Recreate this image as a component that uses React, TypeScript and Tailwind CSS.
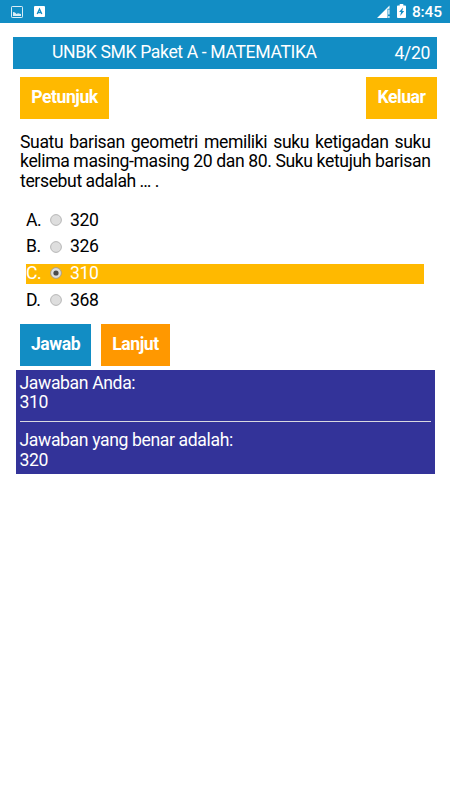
import React from "react";
import clsx from "clsx";

type Option = {
  label: string;
  value: string;
};

const options: Option[] = [
  { label: "A.", value: "320" },
  { label: "B.", value: "326" },
  { label: "C.", value: "310" },
  { label: "D.", value: "368" },
];

const selected = "310";
const correct = "320";

function StatusBar() {
  return (
    <div className="flex h-[23px] items-center bg-[#128dc4] pr-[8px] pl-[11px] text-white">
      <svg width="12" height="12" viewBox="0 0 12 12" className="opacity-85">
        <rect x="0.5" y="0.5" width="11" height="11" rx="0.7" fill="none" stroke="currentColor" />
        <path d="M2 10V6l2 .5L5.500 8l1.500-.7L10 8v2z" fill="currentColor" />
      </svg>
      <svg width="11" height="11" viewBox="0 0 11 11" className="ml-[11px]">
        <rect width="11" height="11" rx="1" fill="currentColor" />
        <path d="M3.200 8 5.500 3 7.800 8M4 6.500h3" fill="none" stroke="#128dc4" strokeWidth="1.300" />
      </svg>
      {/* signal */}
      <svg width="13" height="13" viewBox="0 0 13 13" className="ml-auto">
        <path d="M0 13 12.500 .5v3.200h-2V13z" fill="currentColor" />
        <path d="M11.300 4.500h1.200v5h-1.200zM11.300 11h1.200v2h-1.200z" fill="currentColor" />
      </svg>
      {/* battery */}
      <svg width="9" height="14" viewBox="0 0 10 14" preserveAspectRatio="none" className="mr-[1px] mb-[1px] ml-[7px]">
        <path d="M3 0h4v1.500h2q1 0 1 1V13q0 1-1 1H1q-1 0-1-1V2.500q0-1 1-1h2z" fill="currentColor" />
        <path d="M6.800 3.500 2.300 8h2.200l-1 4 4.500-5H5.800z" fill="#128dc4" />
      </svg>
      <span className="ml-[5px] pt-[2px] text-[15.500px] leading-[21px] font-medium tracking-[-0.1px]">8:45</span>
    </div>
  );
}

function Button({ className, children }: { className: string; children: React.ReactNode }) {
  return (
    <button
      className={clsx(
        "flex h-[41.5px] items-center justify-center text-[17.6px] font-bold tracking-[-0.45px] text-white",
        className
      )}
    >
      {children}
    </button>
  );
}

function Radio({ checked }: { checked: boolean }) {
  return (
    <svg width="12" height="12" viewBox="0 0 12 12">
      <circle cx="6" cy="6" r="5.4" fill="#dedede" stroke={checked ? "#a49b88" : "#b0b0b0"} strokeWidth="0.9" />
      {checked && <circle cx="6" cy="6" r="2.6" fill="#4b4b4b" />}
    </svg>
  );
}

export default function App() {
  return (
    <div className="h-[800px] w-[450px] overflow-hidden bg-white font-['Roboto',sans-serif] text-[17.6px] leading-[19.5px] tracking-[-0.37px] text-black">
      <StatusBar />

      <header className="mt-[14px] ml-[13px] flex h-[32px] w-[424px] items-center bg-[#128dc4] pr-[7px] text-white">
        <div className="flex-1 pb-[1px] pl-[39px]">UNBK SMK Paket A - MATEMATIKA</div>
        <div className="pt-[1px]">4/20</div>
      </header>

      <div className="mt-[8px] ml-[20px] flex w-[417px] justify-between">
        <Button className="w-[89px] bg-[#ffb900]">Petunjuk</Button>
        <Button className="w-[71px] bg-[#ffb900]">Keluar</Button>
      </div>

      <p className="mt-[14px] ml-[20px] w-[410.500px] text-justify [word-spacing:-0.3px]">
        Suatu barisan geometri memiliki suku ketigadan suku kelima masing-masing 20 dan 80. Suku
        ketujuh barisan tersebut adalah … .
      </p>

      <div className="mt-[19.700px] ml-[26px] flex w-[398px] flex-col gap-[7.200px]">
        {options.map((o) => {
          const checked = o.value === selected;
          return (
            <label
              key={o.label}
              className={clsx("flex h-[19.500px] items-center", checked && "bg-[#ffb900] text-white")}
            >
              <span className="w-[24px]">{o.label}</span>
              <span className="pb-[1px]">
                <Radio checked={checked} />
              </span>
              <span className="ml-[8px]">{o.value}</span>
            </label>
          );
        })}
      </div>

      <div className="mt-[13.800px] ml-[20px] flex gap-[10px]">
        <Button className="w-[71px] bg-[#128dc4]">Jawab</Button>
        <Button className="w-[69px] bg-[#ff9800]">Lanjut</Button>
      </div>

      <div className="mt-[4.500px] ml-[16px] h-[104px] w-[418.500px] bg-[#333399] px-[3.500px] pt-[3.500px] text-white">
        <div>Jawaban Anda:</div>
        <div>{selected}</div>
        <hr className="mt-[8.500px] mb-[9px] border-t border-[#d8d8e0]" />
        <div>Jawaban yang benar adalah:</div>
        <div>{correct}</div>
      </div>
    </div>
  );
}
